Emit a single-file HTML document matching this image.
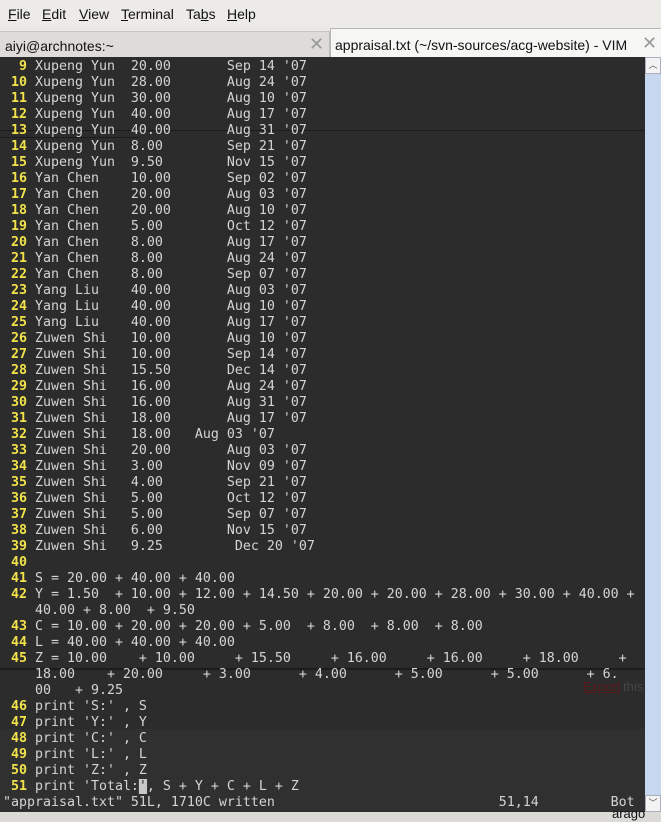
<!DOCTYPE html>
<html><head><meta charset="utf-8"><style>
html,body{margin:0;padding:0;width:661px;height:822px;overflow:hidden;background:#e9e8e5;font-family:"Liberation Sans","DejaVu Sans",sans-serif;}
#menu{position:absolute;left:0;top:0;width:661px;height:28px;background:#ecebe8;font-size:14px;color:#111;}
#menu span{position:absolute;top:6px;}
#menu u{text-decoration:underline;}
#tab1{position:absolute;left:0;top:31px;width:329px;height:26px;background:#dedcd8;border-top:1px solid #c8c6c2;border-right:1px solid #bdbbb7;}
#tab2{position:absolute;left:330px;top:28px;width:331px;height:29px;background:#f6f6f5;border-top:1px solid #b9b7b3;border-left:1px solid #b9b7b3;}
.tt{position:absolute;top:7px;font-size:14px;color:#111;white-space:nowrap;}
.x{position:absolute;top:5px;font-size:18px;color:#9a9a9a;font-weight:bold;}
#term{position:absolute;left:0;top:57px;width:645px;height:755px;background:#2c2c2c;overflow:hidden;}
#sb{position:absolute;left:645px;top:57px;width:16px;height:755px;background:#c6d7ef;}
#sbu,#sbd{position:absolute;left:0;width:14px;height:15px;background:#f3f3f3;border:1px solid #a8b0bc;font-size:9px;text-align:center;color:#555;line-height:15px;}
#bot{position:absolute;left:0;top:812px;width:661px;height:10px;background:#dcdad6;}
pre{margin:0;position:absolute;left:3px;top:59px;font-family:"DejaVu Sans Mono",monospace;font-size:13px;line-height:16px;color:#d4d4d4;transform:scaleX(1.0216);transform-origin:0 0;}
b{color:#f2e24a;font-weight:bold;}
.c{background:#c8c8c8;color:#2c2c2c;}
.ln{position:absolute;left:0;width:645px;height:1px;background:#1c1c1c;}
.g{position:absolute;font-size:13px;color:#111;white-space:nowrap;}
</style></head><body>
<div id="menu">
<span style="left:8px"><u>F</u>ile</span>
<span style="left:42px"><u>E</u>dit</span>
<span style="left:79px"><u>V</u>iew</span>
<span style="left:121px"><u>T</u>erminal</span>
<span style="left:186px">Ta<u>b</u>s</span>
<span style="left:227px"><u>H</u>elp</span>
</div>
<div id="tab1"><span class="tt" style="left:5px;top:6px">aiyi@archnotes:~</span><span class="x" style="left:309px;top:2px">✕</span></div>
<div id="tab2"><span class="tt" style="left:4px;top:8px">appraisal.txt (~/svn-sources/acg-website) - VIM</span><span class="x" style="left:311px;top:4px">✕</span></div>
<div id="term">
<div class="ln" style="top:73px"></div>
<div class="ln" style="top:611px;height:2px"></div>
<div style="position:absolute;left:0;top:80px;width:140px;height:1px;background:#1c1c1c"></div>
<div style="position:absolute;left:0;top:672px;width:645px;height:83px;background:#303030"></div>
</div>
<pre>
<b>  9</b> Xupeng Yun  20.00       Sep 14 '07
<b> 10</b> Xupeng Yun  28.00       Aug 24 '07
<b> 11</b> Xupeng Yun  30.00       Aug 10 '07
<b> 12</b> Xupeng Yun  40.00       Aug 17 '07
<b> 13</b> Xupeng Yun  40.00       Aug 31 '07
<b> 14</b> Xupeng Yun  8.00        Sep 21 '07
<b> 15</b> Xupeng Yun  9.50        Nov 15 '07
<b> 16</b> Yan Chen    10.00       Sep 02 '07
<b> 17</b> Yan Chen    20.00       Aug 03 '07
<b> 18</b> Yan Chen    20.00       Aug 10 '07
<b> 19</b> Yan Chen    5.00        Oct 12 '07
<b> 20</b> Yan Chen    8.00        Aug 17 '07
<b> 21</b> Yan Chen    8.00        Aug 24 '07
<b> 22</b> Yan Chen    8.00        Sep 07 '07
<b> 23</b> Yang Liu    40.00       Aug 03 '07
<b> 24</b> Yang Liu    40.00       Aug 10 '07
<b> 25</b> Yang Liu    40.00       Aug 17 '07
<b> 26</b> Zuwen Shi   10.00       Aug 10 '07
<b> 27</b> Zuwen Shi   10.00       Sep 14 '07
<b> 28</b> Zuwen Shi   15.50       Dec 14 '07
<b> 29</b> Zuwen Shi   16.00       Aug 24 '07
<b> 30</b> Zuwen Shi   16.00       Aug 31 '07
<b> 31</b> Zuwen Shi   18.00       Aug 17 '07
<b> 32</b> Zuwen Shi   18.00   Aug 03 '07
<b> 33</b> Zuwen Shi   20.00       Aug 03 '07
<b> 34</b> Zuwen Shi   3.00        Nov 09 '07
<b> 35</b> Zuwen Shi   4.00        Sep 21 '07
<b> 36</b> Zuwen Shi   5.00        Oct 12 '07
<b> 37</b> Zuwen Shi   5.00        Sep 07 '07
<b> 38</b> Zuwen Shi   6.00        Nov 15 '07
<b> 39</b> Zuwen Shi   9.25         Dec 20 '07
<b> 40</b>
<b> 41</b> S = 20.00 + 40.00 + 40.00
<b> 42</b> Y = 1.50  + 10.00 + 12.00 + 14.50 + 20.00 + 20.00 + 28.00 + 30.00 + 40.00 +
    40.00 + 8.00  + 9.50
<b> 43</b> C = 10.00 + 20.00 + 20.00 + 5.00  + 8.00  + 8.00  + 8.00
<b> 44</b> L = 40.00 + 40.00 + 40.00
<b> 45</b> Z = 10.00    + 10.00     + 15.50     + 16.00     + 16.00     + 18.00     +
    18.00    + 20.00     + 3.00      + 4.00      + 5.00      + 5.00      + 6.
    00   + 9.25
<b> 46</b> print 'S:' , S
<b> 47</b> print 'Y:' , Y
<b> 48</b> print 'C:' , C
<b> 49</b> print 'L:' , L
<b> 50</b> print 'Z:' , Z
<b> 51</b> print 'Total:<span class="c">'</span>, S + Y + C + L + Z
"appraisal.txt" 51L, 1710C written                            51,14         Bot
</pre>
<div class="g" style="left:583px;top:679px;color:#5a1a1a;text-decoration:underline">Export</div>
<div class="g" style="left:623px;top:679px;color:#444">this</div>
<div id="sb"><div id="sbu" style="top:0">︿</div><div id="sbd" style="top:738px">﹀</div></div>
<div id="bot"></div>
<div class="g" style="left:612px;top:806px;color:#111">arago</div>
</body></html>
